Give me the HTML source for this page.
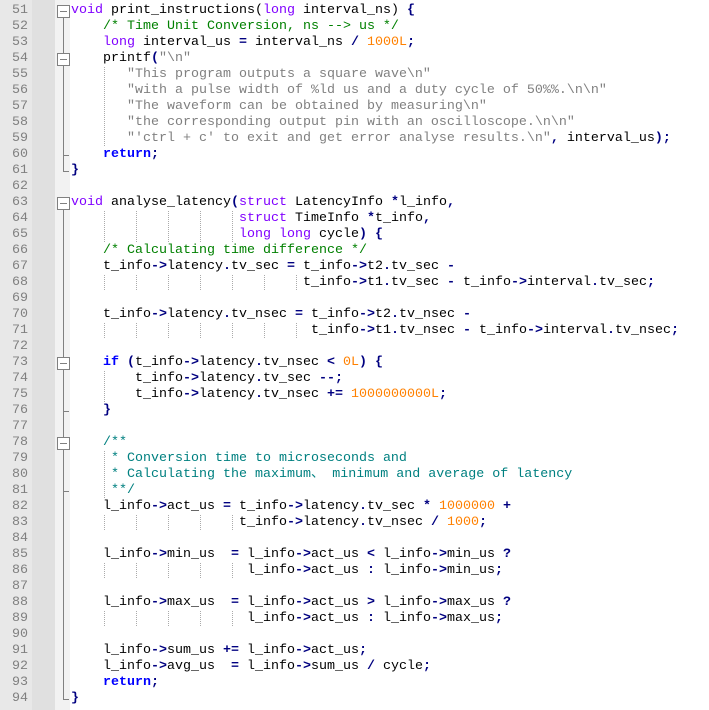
<!DOCTYPE html>
<html><head><meta charset="utf-8"><style>
body{margin:0;width:709px;height:710px;background:#fff;position:relative;overflow:hidden;font-family:"Liberation Mono","Noto Sans CJK SC",monospace;font-size:13.33px;}
.g1{position:absolute;left:0;top:0;width:32px;height:710px;background:#e8e8e8}
.g2{position:absolute;left:32px;top:0;width:23px;height:710px;background:#e0e0e0}
.g3{position:absolute;left:55px;top:0;width:15px;height:710px;background:#f2f2f2}
.ln{position:absolute;left:0;width:28px;text-align:right;color:#808080;height:16px;line-height:16px}
.r{position:absolute;left:71px;height:16px;line-height:16px;white-space:pre;color:#000}
.k{color:#8000ff}.i{color:#0000ff;font-weight:bold}.o{color:#000080;font-weight:bold}.n{color:#ff8000}.s{color:#808080}.c{color:#008000}.d{color:#008080}
.ind{display:inline-block;height:16px;vertical-align:top;background-image:linear-gradient(to right,transparent 1px,#fff 1px),linear-gradient(#aaa 50%,transparent 50%);background-size:32px 16px,32px 2px;background-position:1px 0,1px 0}
.box{position:absolute;left:57px;width:11px;height:11px;border:1px solid #808080;background:#fff;box-sizing:content-box}
.box:after{content:"";position:absolute;left:2px;top:5px;width:7px;height:1px;background:#808080}
.vl{position:absolute;left:63px;width:1px;background:#808080}
.tk{position:absolute;left:63px;width:6px;height:1px;background:#808080}
</style></head><body>
<div class="g1"></div><div class="g2"></div><div class="g3"></div>
<div id="c"></div>
<script>
const L=[
'<span class="k">void</span> print_instructions(<span class="k">long</span> interval_ns) <span class="o">{</span>',
'    <span class="c">/* Time Unit Conversion, ns --&gt; us */</span>',
'    <span class="k">long</span> interval_us <span class="o">=</span> interval_ns <span class="o">/</span> <span class="n">1000L</span><span class="o">;</span>',
'    printf<span class="o">(</span><span class="s">"\\n"</span>',
'@7<span class="s">"This program outputs a square wave\\n"</span>',
'@7<span class="s">"with a pulse width of %ld us and a duty cycle of 50%%.\\n\\n"</span>',
'@7<span class="s">"The waveform can be obtained by measuring\\n"</span>',
'@7<span class="s">"the corresponding output pin with an oscilloscope.\\n\\n"</span>',
'@7<span class="s">"\'ctrl + c\' to exit and get error analyse results.\\n"</span><span class="o">,</span> interval_us<span class="o">);</span>',
'    <span class="i">return</span><span class="o">;</span>',
'<span class="o">}</span>',
'',
'<span class="k">void</span> analyse_latency<span class="o">(</span><span class="k">struct</span> LatencyInfo <span class="o">*</span>l_info<span class="o">,</span>',
'@21<span class="k">struct</span> TimeInfo <span class="o">*</span>t_info<span class="o">,</span>',
'@21<span class="k">long long</span> cycle<span class="o">)</span> <span class="o">{</span>',
'    <span class="c">/* Calculating time difference */</span>',
'    t_info<span class="o">-&gt;</span>latency<span class="o">.</span>tv_sec <span class="o">=</span> t_info<span class="o">-&gt;</span>t2<span class="o">.</span>tv_sec <span class="o">-</span>',
'@29t_info<span class="o">-&gt;</span>t1<span class="o">.</span>tv_sec <span class="o">-</span> t_info<span class="o">-&gt;</span>interval<span class="o">.</span>tv_sec<span class="o">;</span>',
'',
'    t_info<span class="o">-&gt;</span>latency<span class="o">.</span>tv_nsec <span class="o">=</span> t_info<span class="o">-&gt;</span>t2<span class="o">.</span>tv_nsec <span class="o">-</span>',
'@30t_info<span class="o">-&gt;</span>t1<span class="o">.</span>tv_nsec <span class="o">-</span> t_info<span class="o">-&gt;</span>interval<span class="o">.</span>tv_nsec<span class="o">;</span>',
'',
'    <span class="i">if</span> <span class="o">(</span>t_info<span class="o">-&gt;</span>latency<span class="o">.</span>tv_nsec <span class="o">&lt;</span> <span class="n">0L</span><span class="o">)</span> <span class="o">{</span>',
'@8t_info<span class="o">-&gt;</span>latency<span class="o">.</span>tv_sec <span class="o">--;</span>',
'@8t_info<span class="o">-&gt;</span>latency<span class="o">.</span>tv_nsec <span class="o">+=</span> <span class="n">1000000000L</span><span class="o">;</span>',
'    <span class="o">}</span>',
'',
'    <span class="d">/**</span>',
'@5<span class="d">* Conversion time to microseconds and</span>',
'@5<span class="d">* Calculating the maximum、 minimum and average of latency</span>',
'@5<span class="d">**/</span>',
'    l_info<span class="o">-&gt;</span>act_us <span class="o">=</span> t_info<span class="o">-&gt;</span>latency<span class="o">.</span>tv_sec <span class="o">*</span> <span class="n">1000000</span> <span class="o">+</span>',
'@21t_info<span class="o">-&gt;</span>latency<span class="o">.</span>tv_nsec <span class="o">/</span> <span class="n">1000</span><span class="o">;</span>',
'',
'    l_info<span class="o">-&gt;</span>min_us  <span class="o">=</span> l_info<span class="o">-&gt;</span>act_us <span class="o">&lt;</span> l_info<span class="o">-&gt;</span>min_us <span class="o">?</span>',
'@22l_info<span class="o">-&gt;</span>act_us <span class="o">:</span> l_info<span class="o">-&gt;</span>min_us<span class="o">;</span>',
'',
'    l_info<span class="o">-&gt;</span>max_us  <span class="o">=</span> l_info<span class="o">-&gt;</span>act_us <span class="o">&gt;</span> l_info<span class="o">-&gt;</span>max_us <span class="o">?</span>',
'@22l_info<span class="o">-&gt;</span>act_us <span class="o">:</span> l_info<span class="o">-&gt;</span>max_us<span class="o">;</span>',
'',
'    l_info<span class="o">-&gt;</span>sum_us <span class="o">+=</span> l_info<span class="o">-&gt;</span>act_us<span class="o">;</span>',
'    l_info<span class="o">-&gt;</span>avg_us  <span class="o">=</span> l_info<span class="o">-&gt;</span>sum_us <span class="o">/</span> cycle<span class="o">;</span>',
'    <span class="i">return</span><span class="o">;</span>',
'<span class="o">}</span>'];
let h='';
L.forEach((s,j)=>{const y=3+j*16;
 h+=`<div class="ln" style="top:${y}px">${51+j}</div>`;
 const m=s.match(/^@(\d+)/);
 if(m){const n=+m[1];s=s.slice(m[0].length);
  s='    <span class="ind" style="width:'+((n-4)*8)+'px"></span>'+s;}
 h+=`<div class="r" style="top:${y}px">${s}</div>`;});
const Y=l=>3+(l-51)*16;
[[51,61],[63,94]].forEach(([a,b])=>{h+=`<div class="vl" style="top:${Y(a)+8}px;height:${Y(b)+8-Y(a)-8}px"></div><div class="tk" style="top:${Y(b)+8}px"></div>`;});
[60,76,81].forEach(l=>h+=`<div class="tk" style="top:${Y(l)+8}px"></div>`);
[51,54,63,73,78].forEach(l=>h+=`<div class="box" style="top:${Y(l)+2}px"></div>`);
document.getElementById('c').innerHTML=h;
</script>
</body></html>
